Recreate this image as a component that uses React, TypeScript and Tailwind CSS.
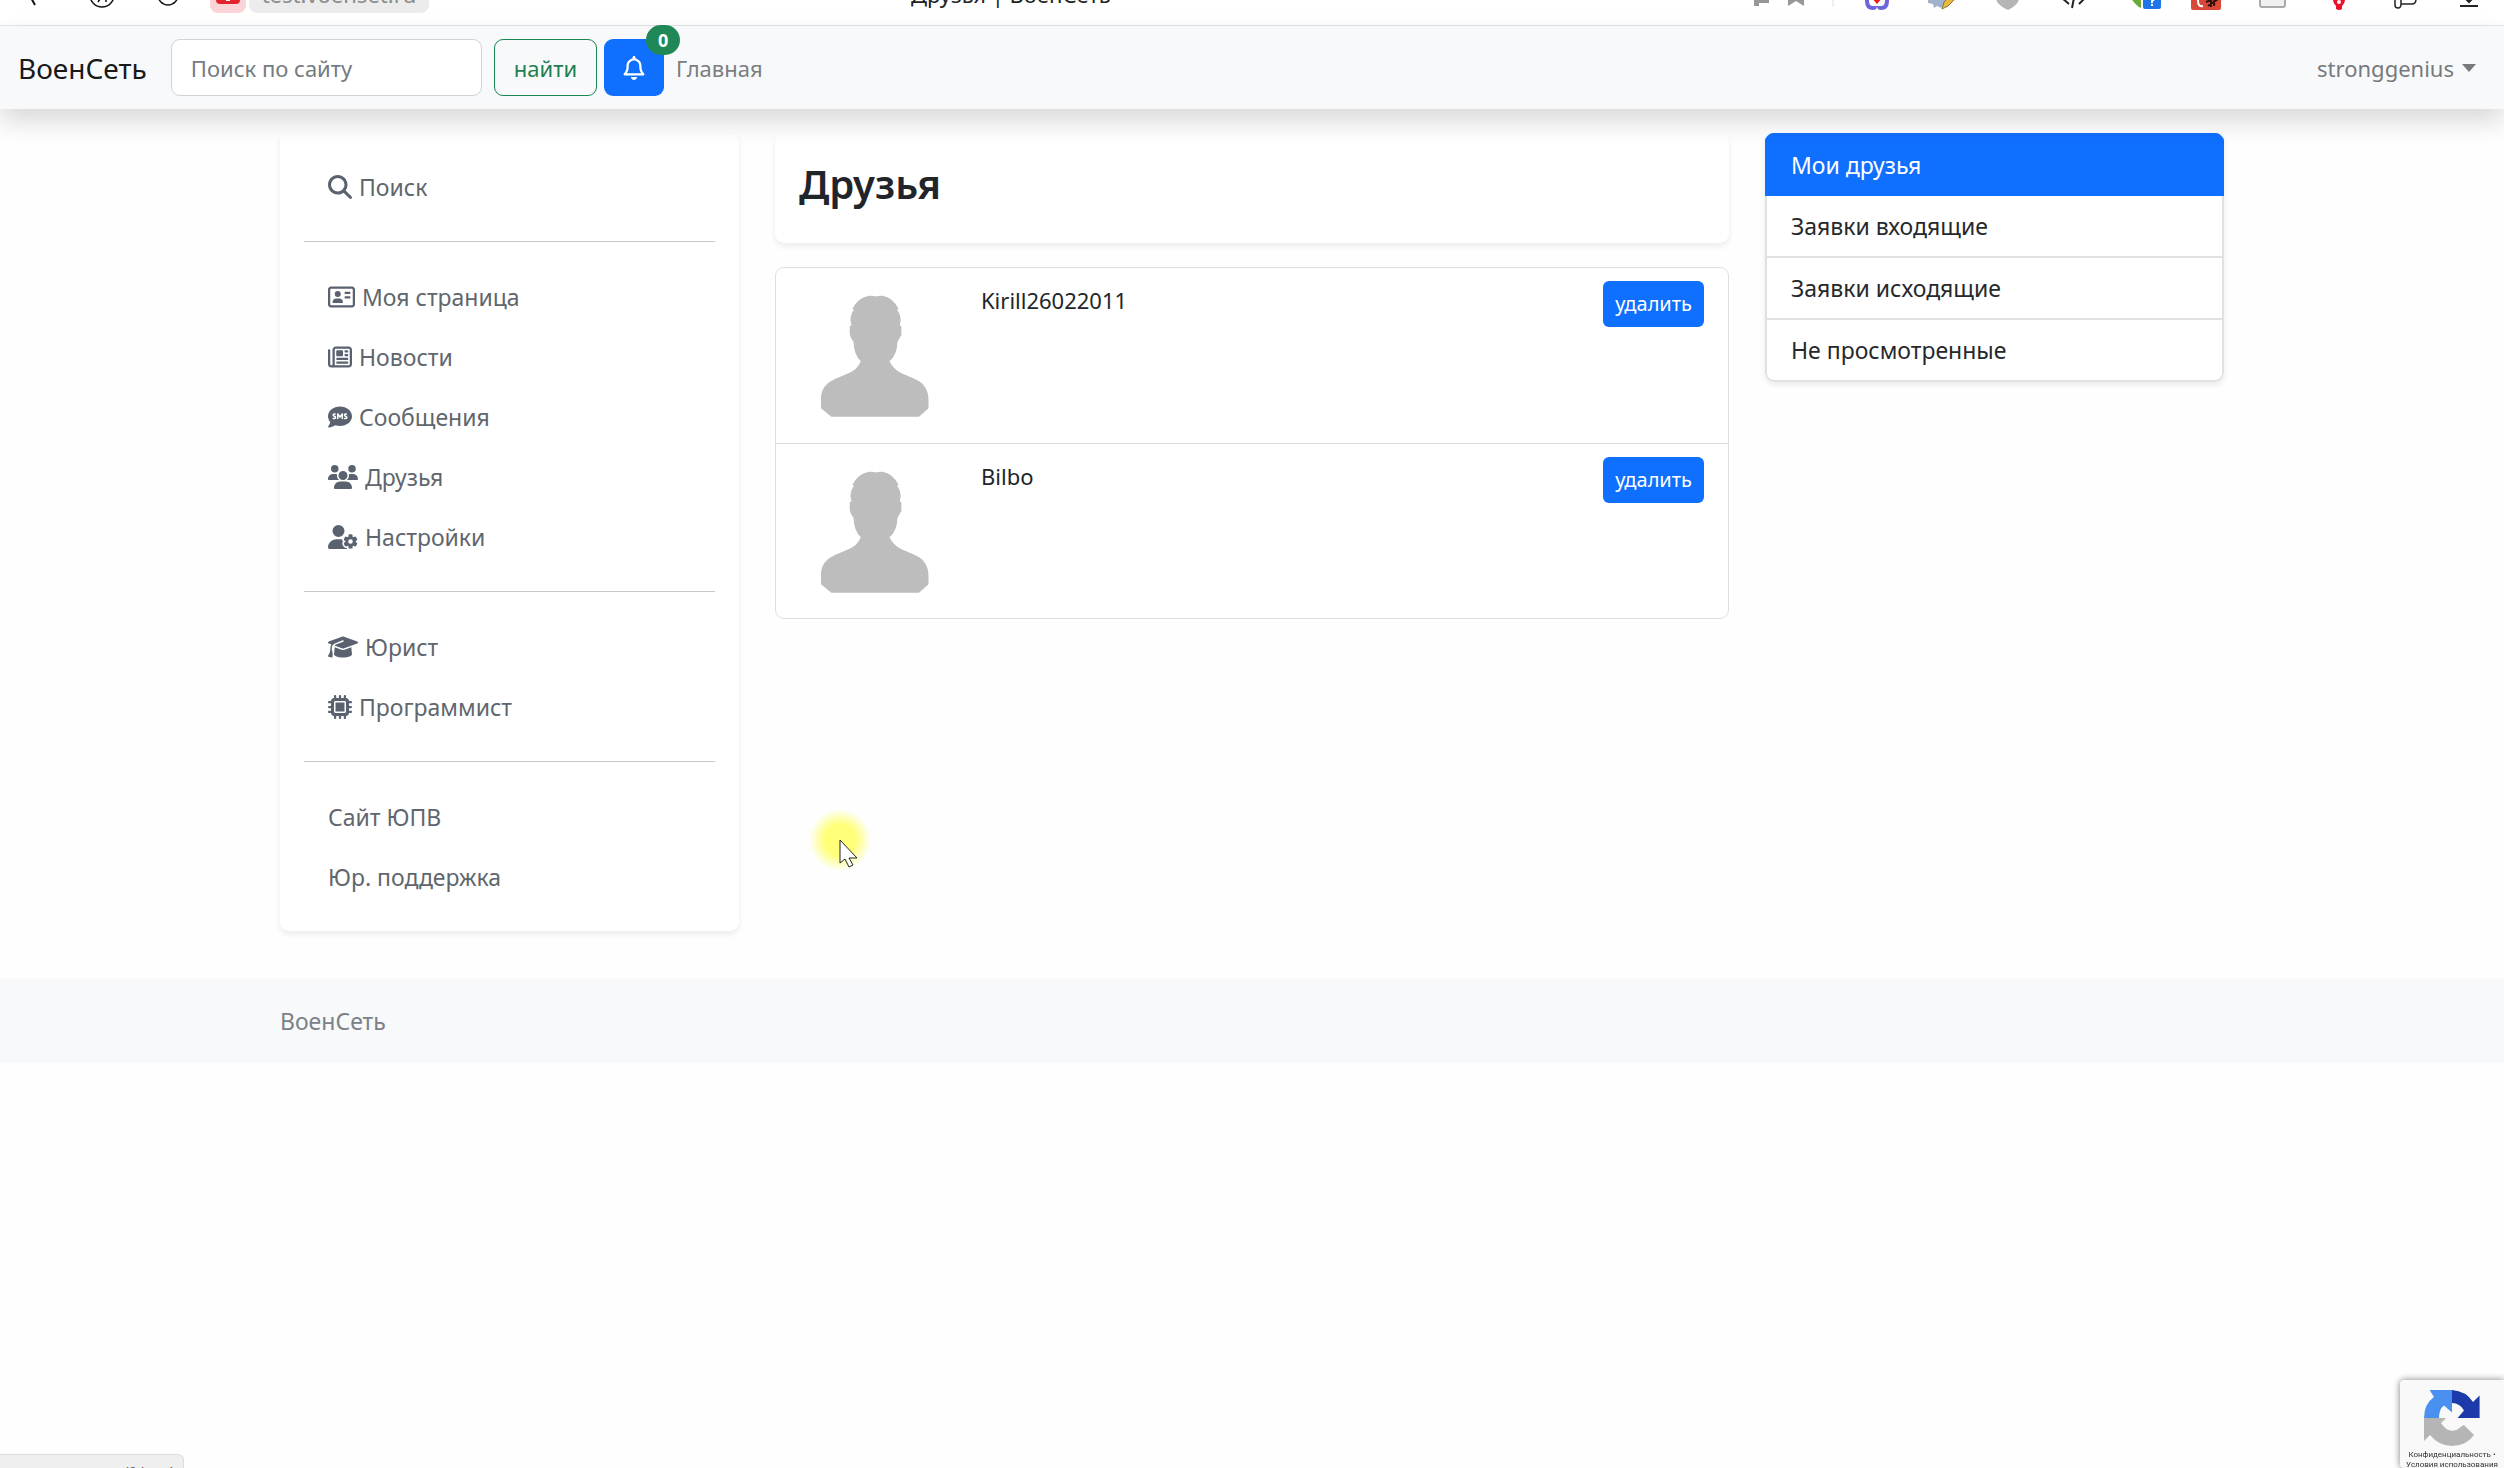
import {
  FaCommentSms,
  FaGraduationCap,
  FaMagnifyingGlass,
  FaMicrochip,
  FaRegAddressCard,
  FaRegBell,
  FaRegNewspaper,
  FaUserGear,
  FaUsers,
} from "react-icons/fa6";
import { clsx } from "clsx";

type MenuItem = {
  label: string;
  href: string;
  icon?: React.ReactNode;
};

// Font Awesome glyphs differ in width, so each keeps its own box
const icon = "h-6 w-6 text-[#5a6270]";
const iconMedium = "h-6 w-[27px] text-[#5a6270]";
const iconWide = "h-6 w-[30px] text-[#5a6270]";

const menuGroups: MenuItem[][] = [
  [{ label: "Поиск", href: "#search", icon: <FaMagnifyingGlass className={icon} /> }],
  [
    { label: "Моя страница", href: "#me", icon: <FaRegAddressCard className={iconMedium} /> },
    { label: "Новости", href: "#news", icon: <FaRegNewspaper className={icon} /> },
    { label: "Сообщения", href: "#messages", icon: <FaCommentSms className={icon} /> },
    { label: "Друзья", href: "#friends", icon: <FaUsers className={iconWide} /> },
    { label: "Настройки", href: "#settings", icon: <FaUserGear className={iconWide} /> },
  ],
  [
    { label: "Юрист", href: "#lawyer", icon: <FaGraduationCap className={iconWide} /> },
    { label: "Программист", href: "#programmer", icon: <FaMicrochip className={icon} /> },
  ],
  [
    { label: "Сайт ЮПВ", href: "#site" },
    { label: "Юр. поддержка", href: "#support" },
  ],
];

const friends = ["Kirill26022011", "Bilbo"];

const filters = [
  { label: "Мои друзья", href: "#my", active: true },
  { label: "Заявки входящие", href: "#incoming" },
  { label: "Заявки исходящие", href: "#outgoing" },
  { label: "Не просмотренные", href: "#unseen" },
];

const ToolbarIcon: React.FC<{ children: React.ReactNode }> = ({ children }) => (
  <svg viewBox="0 0 66 38" className="h-[38px] w-[66px] shrink-0" fill="none" aria-hidden="true">
    {children}
  </svg>
);

const BrowserBar = () => (
  <div className="h-[26px] overflow-hidden border-b border-[#e4e4e4] bg-white">
    <div className="-mt-[25px] flex h-[38px]">
      <ToolbarIcon>
        <path d="M45 10 30 21 35 30" stroke="#111" strokeWidth="2" />
      </ToolbarIcon>
      <ToolbarIcon>
        <circle cx="36" cy="20" r="12" stroke="#111" strokeWidth="1.5" />
        <path d="M40 27V14h-4q-4 0-4 3.500t4 3.500h4M36 21l-4 6" stroke="#111" strokeWidth="1.5" />
      </ToolbarIcon>
      <ToolbarIcon>
        <circle cx="36" cy="20" r="10" stroke="#111" strokeWidth="1.5" />
      </ToolbarIcon>
      <div className="ml-3 flex w-9 items-center justify-center rounded-lg bg-[#fad4d6]">
        <svg viewBox="0 0 24 24" className="size-6" aria-hidden="true">
          <rect width="24" height="22" rx="4" fill="#e3262e" />
          <path d="M10 10h4v9h-4z" fill="#fff" />
        </svg>
      </div>
      <div className="ml-[3px] flex w-[180px] items-center justify-center rounded-lg bg-[#ececec]">
        <span className="text-[22px] text-[#8b8b8b]">test.voenset.ru</span>
      </div>
      <div className="flex flex-1 items-center pl-[482px] text-[22px] whitespace-nowrap text-[#222]">
        Друзья | ВоенСеть
      </div>
      <svg viewBox="0 0 104 38" className="h-[38px] w-[104px] shrink-0" aria-hidden="true">
        <path d="M14 10h15v18H19v3h-5z" fill="#979797" />
        <path d="M48 10h16v21l-8-5-8 5z" fill="#979797" />
        <path d="M93 10v22" stroke="#dedede" />
      </svg>
      <ToolbarIcon>
        <path
          d="M23 18v8q0 7 6 7 2 0 2-2M43 18v8q0 7-6 7-2 0-2-2"
          stroke="#6b66dc"
          strokeWidth="4"
        />
        <path d="M27 18h12v4l-6 7-6-7z" fill="#f01818" />
      </ToolbarIcon>
      <ToolbarIcon>
        <path d="M18 24h22l-9 9-4-2-3 2-1-4-5-1z" fill="#9fb3cc" />
        <path d="m32 34 2-7 9-9 4 4-9 9z" fill="#e6bb3c" stroke="#8d7637" />
      </ToolbarIcon>
      <ToolbarIcon>
        <path d="M20 18h23v6q-1 6-11 11-11-5-12-11z" fill="#b5b5b5" />
      </ToolbarIcon>
      <ToolbarIcon>
        <path d="m27 29-7-6 7-7M37 29l6-6-6-7M30 33l4-20" stroke="#222" strokeWidth="2" />
      </ToolbarIcon>
      <ToolbarIcon>
        <path d="m22 22 11-6v17q-5-2-11-11" fill="#67ad35" />
        <rect x="35" y="12" width="18" height="22" rx="2" fill="#1f74e8" />
        <path d="M41 22q0-3 3-3t3 3q0 2-3 4v2M44 29v2" stroke="#fff" strokeWidth="2" />
      </ToolbarIcon>
      <ToolbarIcon>
        <rect x="17" y="8" width="30" height="27" rx="2" fill="#d8493a" />
        <path d="M29 20q-5-1-5 6 0 6 5 5" stroke="#fff" strokeWidth="2" />
        <path d="M37 20v12m4-12-1 11m-8-4 12-5m-10 9 10-7" stroke="#33100c" strokeWidth="2" />
      </ToolbarIcon>
      <ToolbarIcon>
        <rect x="20" y="10" width="25" height="22" rx="2" fill="#f0f0f0" stroke="#aaa" strokeWidth="2" />
      </ToolbarIcon>
      <ToolbarIcon>
        <path d="M27 18h12v7q0 3-3 6v3q-3 2-6 0v-3q-3-3-3-6z" fill="#ee1029" />
        <circle cx="33" cy="27" r="2" fill="#fff" />
      </ToolbarIcon>
      <ToolbarIcon>
        <path d="M23 16v14q0 3 3 3t3-4h11q4 0 4-5v-8M29 16v13" stroke="#222" strokeWidth="1.500" />
      </ToolbarIcon>
      <ToolbarIcon>
        <path d="M31 14v13m-6-6 6 6 6-6M22 31h18" stroke="#222" strokeWidth="2" />
      </ToolbarIcon>
    </div>
  </div>
);

const Navbar = () => (
  <nav className="relative z-10 flex items-center justify-between bg-[#f8f9fb] px-[18px] py-[13px] text-[22px] shadow-[0_12px_24px_rgba(0,0,0,0.15)]">
    <div className="flex items-center">
      <a href="#home" className="mr-6 text-[28px] leading-9 text-[#191919]">
        ВоенСеть
      </a>
      <form className="flex gap-3 self-stretch" onSubmit={(e) => e.preventDefault()}>
        <input
          type="search"
          aria-label="Поиск по сайту"
          placeholder="Поиск по сайту"
          className="w-[311px] rounded-[9px] border border-[#ced4da] bg-white px-[19px] leading-9 placeholder:text-[#747b82]"
        />
        <button
          type="submit"
          className="rounded-[9px] border border-[#198754] px-[19px] leading-9 text-[#1e7f52]"
        >
          найти
        </button>
      </form>
      <button
        type="button"
        aria-label="Уведомления"
        className="relative ml-[7px] flex h-[57px] w-[60px] items-center justify-center rounded-[9px] bg-[#0f6fff] text-white"
      >
        <FaRegBell className="size-6" />
        <span className="absolute -top-[14px] -right-4 flex h-[30px] w-[34px] items-center justify-center rounded-full bg-[#208757] text-lg font-bold">
          0
        </span>
      </button>
      <a href="#main" className="ml-3 text-[#7b7d7f]">
        Главная
      </a>
    </div>
    <button type="button" className="flex items-center gap-2 pr-[10px] text-[#777a7d]">
      stronggenius
      <svg viewBox="0 0 14 8" className="h-2 w-[14px]" aria-hidden="true">
        <path d="M0 0h14L7 8z" fill="currentColor" />
      </svg>
    </button>
  </nav>
);

const SideMenu = () => (
  <aside className="rounded-[9px] bg-white p-6 shadow-[0_3px_6px_rgba(0,0,0,0.08)]">
    {menuGroups.map((group, i) => (
      <div key={i}>
        {i > 0 && <hr className="mt-6 mb-[25px] border-[#c8c9cb]" />}
        {group.map((item) => (
          <a
            key={item.label}
            href={item.href}
            className="flex items-center gap-[7px] px-6 py-3 leading-9 text-[#5f666d]"
          >
            {item.icon}
            {item.label}
          </a>
        ))}
      </div>
    ))}
  </aside>
);

const Avatar = () => (
  <svg viewBox="0 0 108 122" className="h-[122px] w-[108px]" role="img" aria-label="Аватар">
    <path
      d="M47 1Q52 .5 54.700 1.500 58 .5 62.400 1 72 3 77.700 14L76 14.500Q80 20 79.600 26L78.800 30.300 80.400 31.500V40L76.500 46.700Q76 60 68.500 66.300 72 74 80 78L94 84Q107.500 90 107.500 105V113.300L98 121.700H10.300L0 113.300V103Q0 90 14.500 83.700L28 78Q36 75 39.800 66.300 33 60 32.500 46.700 28.700 42 28.700 38V31L30.600 30.300Q27.500 22 32.900 14.500L31.400 13.700Q37 3 47 1Z"
      fill="#bdbdbd"
    />
  </svg>
);

const FriendList = () => (
  <ul className="rounded-[9px] border border-[#dfdfdf] bg-white text-[22px]">
    {friends.map((name, i) => (
      <li
        key={name}
        className={clsx("flex h-[175px] items-start px-6 pt-3", i > 0 && "border-t border-[#dfdfdf]")}
      >
        <div className="px-[21px] pt-[15px]">
          <Avatar />
        </div>
        <a href={`#${name}`} className="ml-[31px] flex-1 py-[2px] leading-9 text-[#212529]">
          {name}
        </a>
        <button
          type="button"
          className="mt-px h-[46px] rounded-md bg-[#0f6fff] px-3 text-[20px] text-white"
        >
          удалить
        </button>
      </li>
    ))}
  </ul>
);

const FriendFilters = () => (
  <ul className="overflow-hidden rounded-[9px] shadow-[0_3px_6px_rgba(0,0,0,0.08)]">
    {filters.map((f) => (
      <li
        key={f.label}
        className={clsx(
          "border-x-2 last:rounded-b-[9px]",
          f.active
            ? "border-t-2 border-b border-[#0f6fff] bg-[#0f6fff] text-white"
            : "border-b-2 border-[#e0e1e2] bg-white text-[#26292c]",
        )}
      >
        <a href={f.href} className="block px-6 py-3 leading-9">
          {f.label}
        </a>
      </li>
    ))}
  </ul>
);

const RecaptchaBadge = () => (
  <div className="fixed right-0 bottom-0 h-[88px] w-[104px] overflow-hidden rounded-l-sm bg-[#f9f9f9] pt-[10px] shadow-[0_0_7px_#808080]">
    <svg viewBox="0 0 56 56" className="mx-auto size-14" aria-hidden="true">
      <path d="M0 28Q0 14 10 7L5.600 0H28V22.500L20 15.500Q15 19 15 28Z" fill="#4a90f0" />
      <path d="M28 0Q42 1 49 12L55.600 5.600V28H33.600L40 20.500Q36 13 28 13Z" fill="#1c3aa9" />
      <path d="M0 28H22L17 33Q26 47 38 36L40 35 50 45Q42 56 28 56 15 56 6 45L0 51Z" fill="#b5b5b5" />
    </svg>
    <div className="pt-1 text-center font-[Roboto,sans-serif] text-[8px] leading-[10px] whitespace-nowrap text-[#333]">
      <a href="#privacy">Конфиденциальность</a> •
      <br />
      <a href="#terms">Условия использования</a>
    </div>
  </div>
);

const Pointer = () => (
  <svg
    viewBox="0 0 64 64"
    className="pointer-events-none absolute top-[808px] left-[808px] z-20 size-16"
    aria-hidden="true"
  >
    <defs>
      <radialGradient id="halo">
        <stop offset="0.5" stopColor="#ffff78" />
        <stop offset="1" stopColor="#ffff78" stopOpacity="0" />
      </radialGradient>
    </defs>
    <circle cx="32" cy="32" r="31" fill="url(#halo)" />
    <path d="M32 32V55L37 51 41 59 45 57 41 50H49Z" fill="#fff" stroke="#222" />
  </svg>
);

export default function App() {
  return (
    <div className="relative min-h-screen bg-[#fefefe] font-['Noto_Sans',sans-serif] text-[23px] leading-9 text-[#212529]">
      <BrowserBar />
      <Navbar />
      <main className="mx-auto grid max-w-[1944px] grid-cols-4 items-start gap-9 pt-6 pb-12">
        <SideMenu />
        <section className="col-span-2 flex flex-col gap-6">
          <div className="rounded-[9px] bg-white px-6 pt-[26px] pb-[34px] shadow-[0_3px_6px_rgba(0,0,0,0.08)]">
            <h1 className="text-[40px] leading-[50px] font-semibold">Друзья</h1>
          </div>
          <FriendList />
        </section>
        <FriendFilters />
      </main>
      <footer className="bg-[#f8f9fb] py-6">
        <div className="mx-auto max-w-[1944px] text-[#7b8187]">ВоенСеть</div>
      </footer>
      <div className="fixed bottom-0 left-0 h-[14px] w-[184px] overflow-hidden rounded-tr-md border-t border-r border-[#dcdcdc] bg-[#efefef] px-[10px] pt-1 text-base leading-7 text-[#666]">
        test.voenset.ru/friend
      </div>
      <RecaptchaBadge />
      <Pointer />
    </div>
  );
}
